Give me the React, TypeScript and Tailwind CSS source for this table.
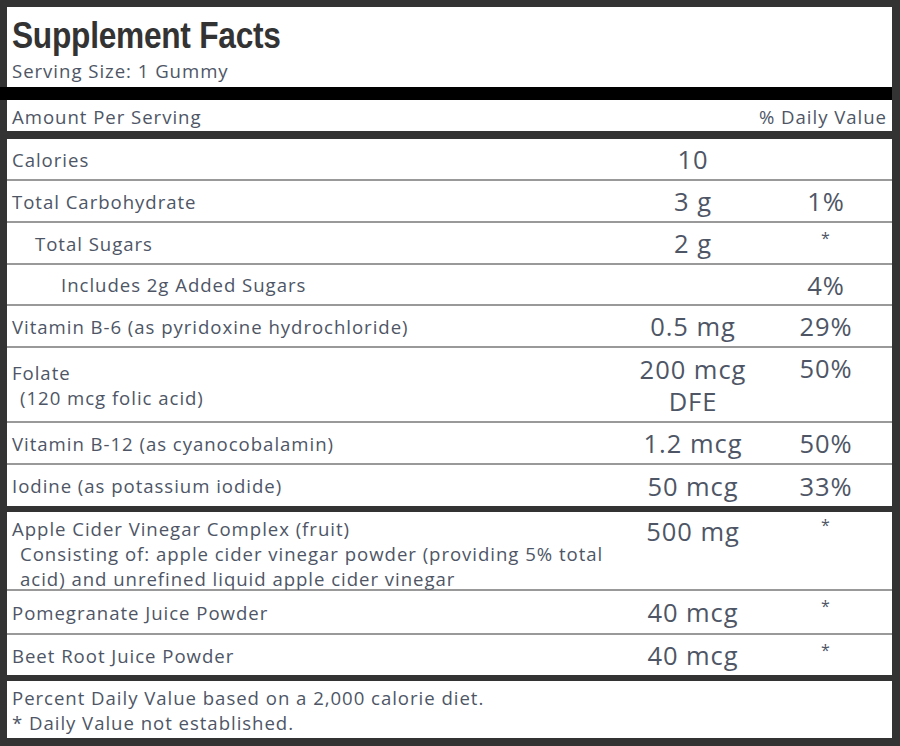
import React from "react";

type Row = {
  label: React.ReactNode;
  amount?: React.ReactNode;
  dv?: string;
  indent?: string;
  h: string;
  line?: boolean;
  top?: boolean;
};

const upper: Row[] = [
  { label: "Calories", amount: "10", h: "h-[40px]", line: true },
  { label: "Total Carbohydrate", amount: "3 g", dv: "1%", h: "h-[40px]", line: true },
  { label: "Total Sugars", amount: "2 g", dv: "*", indent: "pl-[28px]", h: "h-[40px]", line: true },
  { label: "Includes 2g Added Sugars", dv: "4%", indent: "pl-[54px]", h: "h-[39px]", line: true },
  { label: "Vitamin B-6 (as pyridoxine hydrochloride)", amount: "0.5 mg", dv: "29%", h: "h-[40px]", line: true },
  {
    label: (
      <>
        Folate
        <br />
        <span className="pl-[8px]">(120 mcg folic acid)</span>
      </>
    ),
    amount: (
      <>
        200 mcg
        <br />
        DFE
      </>
    ),
    dv: "50%",
    h: "h-[73px]",
    line: true,
  },
  { label: "Vitamin B-12 (as cyanocobalamin)", amount: "1.2 mcg", dv: "50%", h: "h-[40px]", line: true },
  { label: "Iodine (as potassium iodide)", amount: "50 mcg", dv: "33%", h: "h-[41px]" },
];

const lower: Row[] = [
  {
    label: (
      <>
        Apple Cider Vinegar Complex (fruit)
        <br />
        <span className="block pl-[8px] -mr-[14px]">
          Consisting of: apple cider vinegar powder (providing 5% total acid) and unrefined liquid apple cider vinegar
        </span>
      </>
    ),
    amount: "500 mg",
    dv: "*",
    h: "h-[77px]",
    line: true,
    top: true,
  },
  { label: "Pomegranate Juice Powder", amount: "40 mcg", dv: "*", h: "h-[42px]", line: true },
  { label: "Beet Root Juice Powder", amount: "40 mcg", dv: "*", h: "h-[40px]" },
];

function FactRow({ row }: { row: Row }) {
  const align = row.top ? "items-start" : "items-center";
  const multi = row.h === "h-[73px]";
  return (
    <div
      className={`grid grid-cols-[1fr_146px_120px] pr-[6px] ${row.h} ${
        row.line ? "border-b-2 border-[#999]" : ""
      } box-content`}
    >
      <div className={`flex ${align} ${row.top ? "pt-[4px]" : ""} ${row.indent ?? "pl-[5px]"}`}>
        <div className="text-[18.6px] leading-[25px]">{row.label}</div>
      </div>
      <div className={`flex ${align} justify-center ${row.top ? "pt-[3px]" : ""}`}>
        <div className="text-[25.5px] leading-[32px] text-center">{row.amount}</div>
      </div>
      <div className={`flex ${multi ? "items-start pt-[4px]" : align} justify-center`}>
        <div
          className={`text-center ${
            row.dv === "*"
              ? `text-[16px] leading-[22px] self-start ${row.top ? "pt-[2px]" : "pt-[4px]"}`
              : "text-[25.5px] leading-[32px]"
          }`}
        >
          {row.dv}
        </div>
      </div>
    </div>
  );
}

export default function App() {
  return (
    <div className="w-[900px] h-[746px] bg-white border-[#333] border-l-[7px] border-t-[7px] border-r-[8px] border-b-[8px] flex flex-col text-[#4e5666] font-['Open_Sans',sans-serif] tracking-[0.06em]">
      {/* Header */}
      <div className="h-[80px] pl-[5px] pt-[10px]">
        <h1 className="font-['Liberation_Sans',Arial,sans-serif] font-bold text-[36px] leading-[38px] tracking-[-0.3px] text-[#333] scale-x-[0.88] origin-left whitespace-nowrap">
          Supplement Facts
        </h1>
        <p className="mt-[3px] text-[18.6px] leading-[25px]">Serving Size: 1 Gummy</p>
      </div>
      <div className="h-[13px] bg-black -ml-[7px]" />

      <div className="h-[31px] flex items-center justify-between pl-[5px] pr-[5px] pt-[3px] text-[18.6px]">
        <span>Amount Per Serving</span>
        <span>% Daily Value</span>
      </div>
      <div className="h-[8px] bg-[#333]" />

      {upper.map((r, i) => (
        <FactRow key={i} row={r} />
      ))}
      <div className="h-[6px] bg-[#333]" />

      {lower.map((r, i) => (
        <FactRow key={i} row={r} />
      ))}
      <div className="h-[6px] bg-[#333]" />

      {/* Footer */}
      <div className="flex-1 pl-[5px] pt-[4px] text-[18.6px] leading-[25px]">
        <p>Percent Daily Value based on a 2,000 calorie diet.</p>
        <p>* Daily Value not established.</p>
      </div>
    </div>
  );
}
